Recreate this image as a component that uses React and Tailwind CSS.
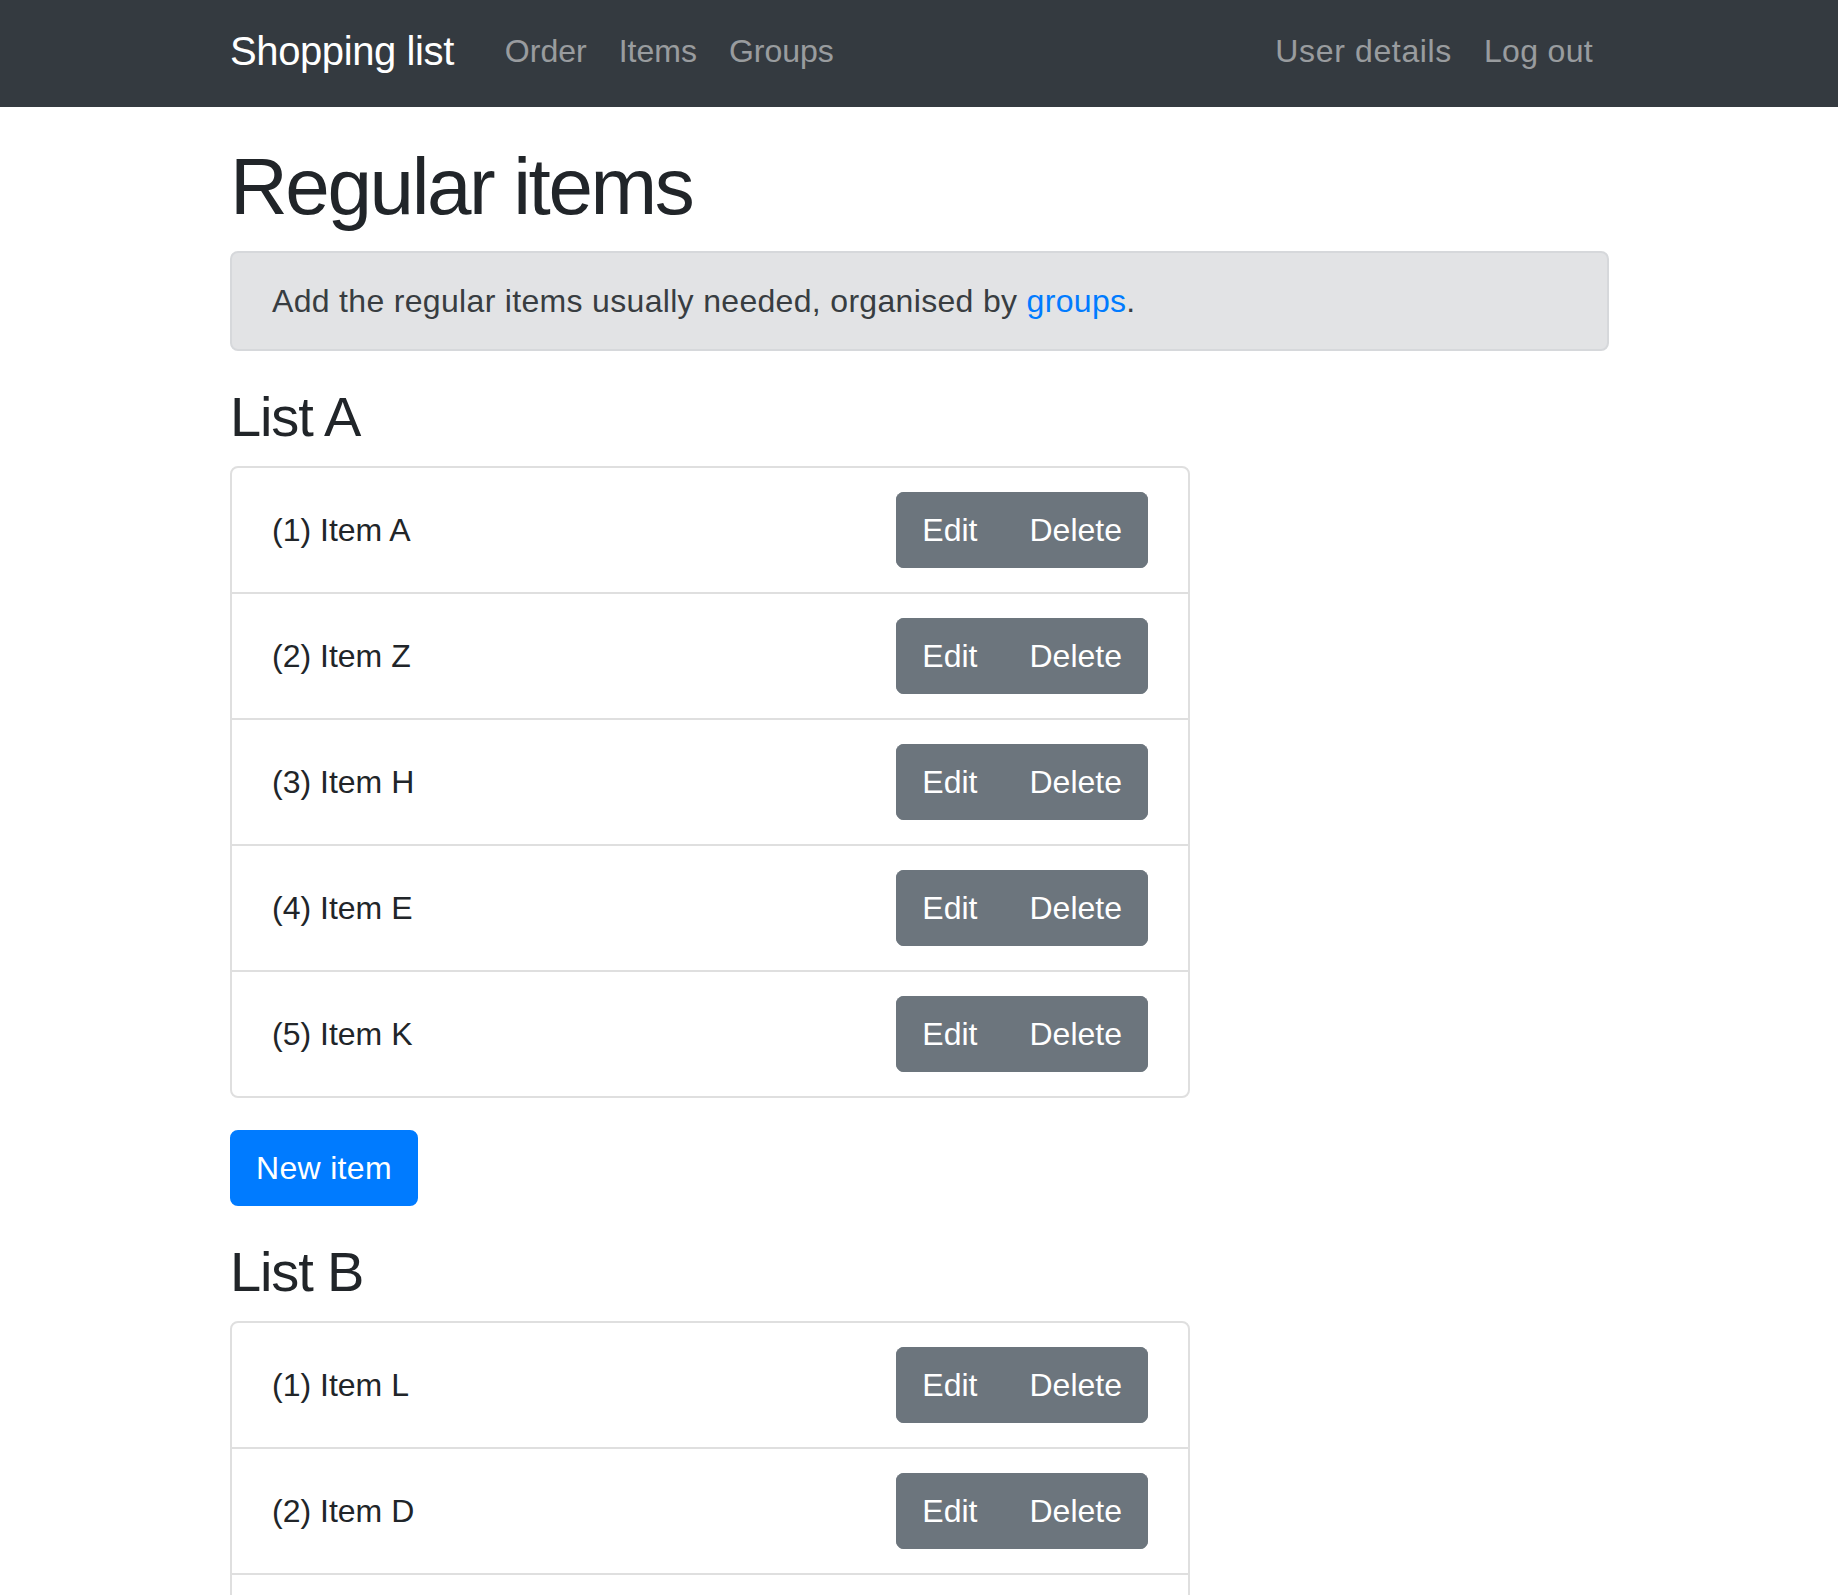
import React from "react";

const listA = ["(1) Item A", "(2) Item Z", "(3) Item H", "(4) Item E", "(5) Item K"];
const listB = ["(1) Item L", "(2) Item D"];

function ItemList({ items, trailingRow }) {
  return (
    <div className="w-[960px] border-2 border-[#dfdfdf] rounded-[8px] divide-y-2 divide-[#dfdfdf]">
      {items.map((it) => (
        <div key={it} className="flex items-center justify-between px-[40px] py-[24px]">
          <span className="text-[32px] leading-[48px] text-[#212529]">{it}</span>
          <div className="flex rounded-[8px] overflow-hidden bg-[#6c757d]">
            <button className="border-2 border-[#6c757d] px-[24px] py-[12px] text-[32px] leading-[48px] text-white">
              Edit
            </button>
            <button className="border-2 border-[#6c757d] px-[24px] py-[12px] text-[32px] leading-[48px] text-white">
              Delete
            </button>
          </div>
        </div>
      ))}
      {trailingRow && <div className="h-[124px]" />}
    </div>
  );
}

export default function App() {
  return (
    <div
      className="min-h-screen bg-white text-[#212529]"
      style={{ fontFamily: '"Liberation Sans", Arial, sans-serif' }}
    >
      <nav className="bg-[#343a40] h-[107px]">
        <div className="w-[1380px] mx-auto h-full flex items-center pb-[6px] pl-[1px]">
          <span className="text-[40px] leading-[60px] text-white mr-[35px] tracking-[-0.01em]">Shopping list</span>
          <a className="px-[16px] text-[32px] leading-[48px] text-white/50">Order</a>
          <a className="px-[16px] text-[32px] leading-[48px] text-white/50">Items</a>
          <a className="px-[16px] text-[32px] leading-[48px] text-white/50">Groups</a>
          <div className="ml-auto flex">
            <a className="px-[16px] text-[32px] leading-[48px] text-white/50 tracking-[0.02em]">User details</a>
            <a className="px-[16px] text-[32px] leading-[48px] text-white/50 tracking-[0.01em]">Log out</a>
          </div>
        </div>
      </nav>
      <main className="w-[1380px] mx-auto pt-[32px] pl-[1px]">
        <h1 className="text-[80px] leading-[96px] font-medium tracking-[-0.03em] mb-[16px]">Regular items</h1>
        <div className="border-2 border-[#d6d8db] bg-[#e2e3e5] text-[#383d41] rounded-[8px] px-[40px] py-[24px] mb-[32px] text-[32px] leading-[48px] tracking-[0.01em]">
          Add the regular items usually needed, organised by{" "}
          <a className="text-[#007bff]">groups</a>.
        </div>
        <h3 className="text-[56px] leading-[67px] font-medium tracking-[-0.02em] mb-[16px]">List A</h3>
        <ItemList items={listA} />
        <div className="mt-[32px] mb-[32px]">
          <button className="bg-[#007bff] border-2 border-[#007bff] rounded-[8px] px-[24px] py-[12px] text-[32px] leading-[48px] text-white tracking-[0.01em]">
            New item
          </button>
        </div>
        <h3 className="text-[56px] leading-[67px] font-medium tracking-[-0.02em] mb-[16px]">List B</h3>
        <ItemList items={listB} trailingRow />
      </main>
    </div>
  );
}
